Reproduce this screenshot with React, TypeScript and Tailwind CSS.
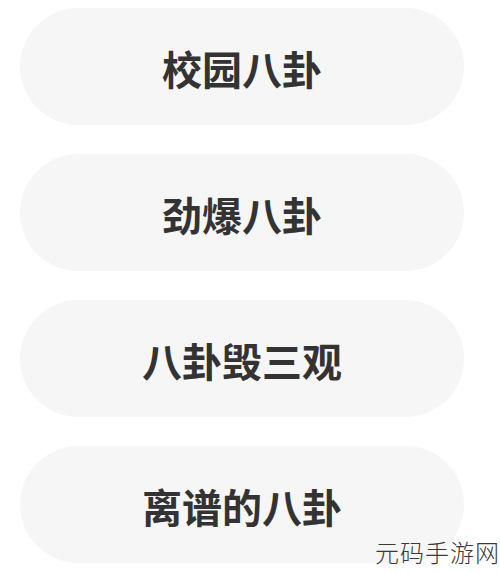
const items = ["校园八卦", "劲爆八卦", "八卦毁三观", "离谱的八卦"];

export default function App() {
  return (
    <div
      className="relative h-[572px] w-[500px] overflow-hidden bg-white"
      style={{ fontFamily: '"Noto Sans CJK SC", "Noto Sans", sans-serif' }}
    >
      <div className="flex flex-col gap-[29px] pl-[20px] pt-[8px]">
        {items.map((label) => (
          <div
            key={label}
            className="flex h-[117px] w-[444px] items-center justify-center rounded-full bg-[#f6f6f6] pt-[3px]"
          >
            <span className="text-[40px] font-bold leading-none text-[#333333]">
              {label}
            </span>
          </div>
        ))}
      </div>
      {/* watermark */}
      <div className="absolute right-0 top-[540px] whitespace-nowrap text-[24px] font-light leading-none tracking-[1px] text-[#3a3a3a]">
        元码手游网
      </div>
    </div>
  );
}
